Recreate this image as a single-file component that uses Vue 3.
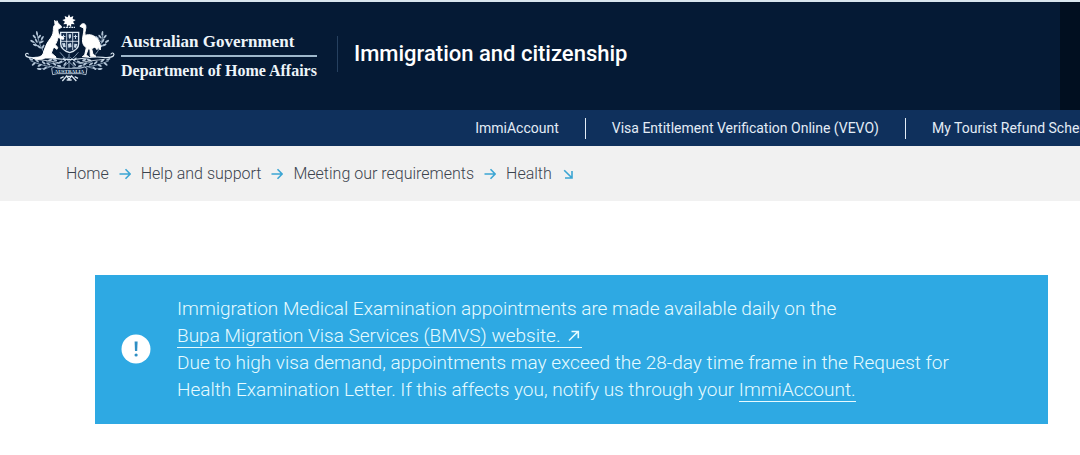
<template>
  <div class="page">
    <header class="site-header">
      <div class="brand">
        <a href="#" class="brand-logo" aria-label="Department of Home Affairs">
          <svg class="crest" viewBox="27 40 276 204" xmlns="http://www.w3.org/2000/svg" aria-hidden="true">
            <!-- star -->
            <path
              fill="#fff"
              d="M162 41l4 9 9-4-2 9 9 3-8 5 5 8-10-1-1 10-6-7-6 7-1-10-10 1 5-8-8-5 9-3-2-9 9 4z"
            />
            <path d="M145 80h35" stroke="#dce8f2" stroke-width="4" stroke-dasharray="6 2" />

            <!-- wattle -->
            <g fill="none" stroke="#9fb4ca" stroke-width="2.5">
              <path d="M92 162C80 145 72 130 66 98M78 142c-8-4-14-8-20-18M72 126c6-4 9-9 10-16" />
              <path d="M240 162c12-12 20-30 24-62M254 140c10-4 16-8 22-16M259 124c-6-4-9-9-10-14" />
              <path d="M150 200c-30 2-70-4-104-20M110 196c-14 8-26 10-40 7M172 200c34 2 76-4 110-20M214 196c16 8 30 10 42 7" />
              <path d="M160 170c-20 22-40 24-66 12M166 170c20 22 40 24 66 12M162 160v45M135 155c10 12 20 22 44 44M190 155c-10 12-20 22-44 44" />
            </g>
            <g fill="#b4c6d8">
              <ellipse
                v-for="(leaf, i) in leaves"
                :key="i"
                :cx="leaf[0]"
                :cy="leaf[1]"
                rx="7"
                ry="2.8"
                :transform="`rotate(${leaf[2]} ${leaf[0]} ${leaf[1]})`"
              />
            </g>

            <!-- scroll under the animals -->
            <g fill="none" stroke="#dce8f2" stroke-width="3.5" stroke-linecap="round">
              <path d="M40 160c-5-6-11 1-7 6 8 9 28 3 48 3 28 0 48 8 82 8s54-8 84-8c20 0 38 6 48-3 5-6-2-13-7-6" />
              <path d="M60 176c24 3 50 4 70 10M268 176c-24 3-50 4-70 10" stroke-width="2.5" />
            </g>

            <!-- shield -->
            <path d="M137 95h54v34c0 14-12 22-27 27-15-5-27-13-27-27z" fill="#142c4b" stroke="#dce8f2" stroke-width="4" />
            <path d="M137 122h54M155 96v52M173 96v52" stroke="#dce8f2" stroke-width="2.5" />
            <g fill="#c9d8e6">
              <path d="M144 102h3v4h4v3h-4v6h-3v-6h-4v-3h4zM161 101h7v9l-4 5-3-5zM180 102h3v4h4v3h-4v6h-3v-6h-4v-3h4z" />
              <path d="M141 128l9-1 2 12-7 1zM159 130l9-3 2 12-10 2zM178 129l9 1-4 12-6-2z" />
            </g>

            <g fill="#fff" stroke="#fff" stroke-width="3" stroke-linejoin="round">
              <!-- kangaroo -->
              <path
                d="M119 59l5 8 2-7 4 9c5 2 9 7 10 11l-11 5c-1 8 2 15 5 19l10 6 3 5-5 1-13-6c-1 9-5 16-8 22l7 8-2 6-10-7-7 18 14 12-1 3H90c-8 6-25 4-37 1 16-1 26-5 31-13 5-16 9-29 18-41 8-10 12-17 13-29 0-9 0-13 5-18z"
              />
              <!-- emu -->
              <path
                d="M195 77c3-9 14-11 17-3 3 9-4 17-2 30 15-5 29 0 38 12 7 9 9 20 8 32l-8-9-2 8-6-8-10 5 4 17 9 6h-17l-1-21-5-2-7 19 8 5h-19l7-5 5-22c-10-6-13-16-11-29 2-15 5-22 3-30z"
              />
            </g>

            <!-- ribbon -->
            <path d="M110 203l8-4 12 4h66l12-4 8 4-3 19-14-3h-72l-14 3z" fill="#0b203f" stroke="#c9d8e6" stroke-width="2.5" />
            <text x="163" y="217" text-anchor="middle" class="crest-text">AUSTRALIA</text>
            <path
              d="M142 241l12-14h17l13 14M154 224l8 12 9-12M146 228l-10 5M179 228l10 5M155 238h15"
              fill="none"
              stroke="#dce8f2"
              stroke-width="4"
            />
          </svg>
          <span class="brand-names">
            <span class="brand-name government">Australian Government</span>
            <span class="brand-name">Department of Home Affairs</span>
          </span>
        </a>
        <h1 class="site-title">Immigration and citizenship</h1>
      </div>
      <div class="header-end"></div>
    </header>

    <nav class="service-nav" aria-label="Services">
      <a v-for="service in services" :key="service" href="#" class="service-link">{{ service }}</a>
    </nav>

    <nav class="breadcrumb" aria-label="Breadcrumb">
      <template v-for="(crumb, i) in crumbs" :key="crumb">
        <a href="#" class="crumb">{{ crumb }}</a>
        <svg class="crumb-arrow" viewBox="0 0 12 12" aria-hidden="true">
          <path v-if="i < crumbs.length - 1" d="M0.5 6h10.5M6.5 1.2L11.2 6 6.5 10.8" />
          <path v-else d="M2.2 2.2l7.6 7.6M10 3v7H3" />
        </svg>
      </template>
    </nav>

    <main class="content">
      <section class="alert">
        <svg class="alert-icon" viewBox="0 0 30 30" aria-hidden="true">
          <circle cx="15" cy="15" r="14.5" fill="#fff" />
          <path d="M13.6 7.5h3l-.4 9.5h-2.2z" fill="#2f8fc4" />
          <circle cx="15.1" cy="21" r="1.6" fill="#2f8fc4" />
        </svg>
        <p class="alert-text">
          Immigration Medical Examination appointments are made available daily on the<br />
          <a href="#" class="alert-link">Bupa Migration Visa Services (BMVS) website.<svg class="external" viewBox="0 0 12 12" aria-hidden="true"><path d="M1 10.5L9.5 2M3.5 1.5h6.8v6.8" /></svg></a><br />
          Due to high visa demand, appointments may exceed the 28-day time frame in the Request for
          Health Examination Letter. If this affects you, notify us through your
          <a href="#" class="alert-link">ImmiAccount.</a>
        </p>
      </section>
    </main>
  </div>
</template>

<script setup>
const services = [
  'ImmiAccount',
  'Visa Entitlement Verification Online (VEVO)',
  'My Tourist Refund Scheme (TRS)'
]

const crumbs = ['Home', 'Help and support', 'Meeting our requirements', 'Health']

// x, y, angle
const leftLeaves = [
  [66, 98, 80], [58, 108, 50], [73, 108, -50], [52, 122, 30], [64, 120, 60],
  [82, 112, -60], [80, 124, -30], [60, 133, 20], [72, 138, 40], [84, 138, -60],
  [48, 176, 20], [56, 190, -40], [66, 180, 40], [74, 194, -30], [86, 186, 40],
  [72, 205, 10], [90, 203, -40], [100, 190, 30], [106, 178, -20], [118, 190, 40],
  [120, 178, 20], [136, 184, -30], [132, 196, 10], [148, 176, 50], [150, 190, -50]
]
const leaves = [...leftLeaves, ...leftLeaves.map(([x, y, angle]) => [328 - x, y, -angle])]
</script>

<style>
body {
  margin: 0;
  background: #fff;
}
</style>

<style scoped>
.page {
  font-family: Roboto, "Liberation Sans", sans-serif;
  overflow: hidden;
}

a {
  color: inherit;
  text-decoration: none;
}

.site-header {
  display: flex;
  justify-content: space-between;
  height: 108px;
  border-top: 2px solid #d9e6ee;
  background: #051a35;
  color: #fff;
}

.brand {
  display: flex;
  align-items: flex-start;
  padding: 12px 0 0 24px;
}

.brand-logo {
  display: flex;
  align-items: flex-start;
  gap: 5px;
}

.crest {
  width: 92px;
  height: 68px;
}

.crest-text {
  font-family: "Liberation Serif", serif;
  font-size: 15px;
  font-weight: 700;
  fill: #dce8f2;
}

.brand-names {
  display: flex;
  flex-direction: column;
  padding-top: 14px;
  color: #eef5fa;
  font-family: "Liberation Serif", serif;
  font-size: 16px;
  font-weight: 700;
  line-height: 28px;
  white-space: nowrap;
}

.brand-name {
  height: 27px;
}

.government {
  border-bottom: 2px solid #9fb8cc;
  font-size: 17px;
}

.site-title {
  margin: 22px 0 0 20px;
  padding-left: 16px;
  border-left: 1px solid #26405f;
  font-size: 22px;
  font-weight: 500;
  line-height: 36px;
  white-space: nowrap;
}

.header-end {
  width: 20px;
  background: #010f20;
}

.service-nav {
  display: flex;
  align-items: center;
  height: 36px;
  padding-left: 44%;
  background: #0f305c;
  color: #e3ecf6;
  font-size: 14px;
}

.service-link {
  flex: none;
  line-height: 21px;
  white-space: nowrap;
}

.service-link + .service-link {
  margin-left: 26px;
  padding-left: 26px;
  border-left: 1px solid #e3ecf6;
}

.breadcrumb {
  display: flex;
  align-items: center;
  gap: 10px;
  height: 55px;
  padding-left: 66px;
  background: #f1f1f1;
  color: #3b434d;
  font-size: 16px;
  font-weight: 300;
}

.crumb {
  white-space: nowrap;
}

.crumb-arrow {
  width: 12px;
  height: 12px;
  fill: none;
  stroke: #3ba5d3;
  stroke-width: 1.6;
}

.content {
  padding: 74px 32px 31px 95px;
}

.alert {
  display: flex;
  align-items: center;
  gap: 26px;
  padding: 20px 80px 21px 26px;
  background: #2ea9e3;
  color: #e6fbff;
}

.alert-icon {
  flex: none;
  width: 30px;
  height: 30px;
}

.alert-text {
  margin: 0;
  font-size: 19px;
  font-weight: 300;
  line-height: 27px;
}

.alert-link {
  border-bottom: 1px solid #e6fbff;
}

.external {
  width: 12px;
  height: 12px;
  margin: 0 2px 0 8px;
  fill: none;
  stroke: #e6fbff;
  stroke-width: 1.6;
}
</style>
